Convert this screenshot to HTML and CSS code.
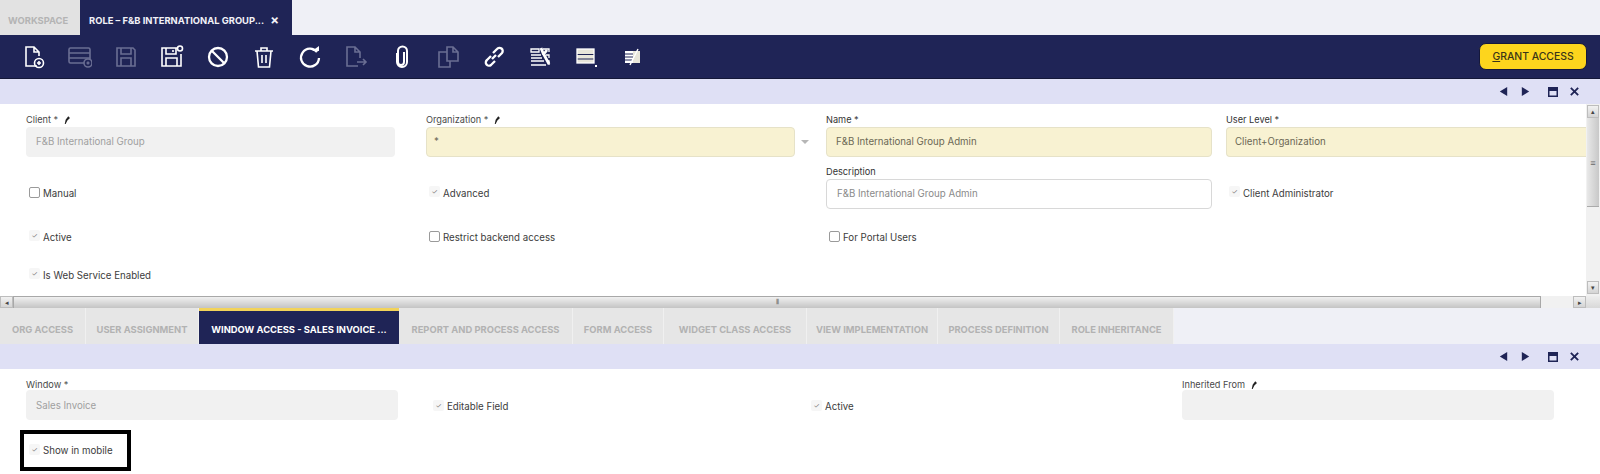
FILE: index.html
```html
<!DOCTYPE html>
<html lang="en">
<head>
<meta charset="utf-8">
<title>Role</title>
<link rel="stylesheet" href="styles.css">
</head>
<body>
<div class="maintabs">
  <div class="maintab">WORKSPACE</div>
  <div class="maintab active"><span>ROLE – F&amp;B INTERNATIONAL GROUP...</span><span class="x">×</span></div>
</div>
<div class="toolbar">
  <div class="btn"><svg viewBox="0 0 24 24"><path d="M15 21H4V2h8l5 5v4M12 2v5h5"/><circle cx="17" cy="18" r="4.500"/><path d="M15 18h4M17 16v4"/></svg></div>
  <div class="btn off"><svg viewBox="0 0 24 24"><rect x="1" y="3" width="21" height="15" rx="1.500"/><path d="M1 8h21M1 13h21"/><circle cx="20" cy="18" r="4" class="fillbg"/><path d="M18.500 18h3M20 16.500v3"/></svg></div>
  <div class="btn off"><svg viewBox="0 0 24 24"><path d="M3 3h16l2 2v16H3z"/><path d="M7 3v6h10V3M7 21v-8h10v8"/></svg></div>
  <div class="btn"><svg viewBox="0 0 24 24"><path d="M18 3H2v18h19V9"/><path d="M6 3v6h10V3M6 21v-8h11v8M13 5v2"/><circle cx="20" cy="3.500" r="2.500"/></svg></div>
  <div class="btn"><svg viewBox="0 0 24 24" class="thick"><circle cx="12" cy="12" r="9"/><path d="M6 6l12 12"/></svg></div>
  <div class="btn"><svg viewBox="0 0 24 24"><path d="M3 6h18M9 6V3h6v3M5 6l1.500 16h11L19 6M10 10v8M14 10v8"/></svg></div>
  <div class="btn"><svg viewBox="0 0 24 24" class="thick"><path d="M19 7a9 9 0 1 0 2 6"/><path d="M14 6h7V1z" class="fillwhite"/></svg></div>
  <div class="btn off"><svg viewBox="0 0 24 24"><path d="M14 21H3V2h8l5 5v6M11 2v5h5M13 17h9M19 14l3 3-3 3"/></svg></div>
  <div class="btn"><svg viewBox="0 0 24 24"><path d="M7 8v9a5 5 0 0 0 10 0V6a4.500 4.500 0 0 0-9 0v11a3 3 0 0 0 6 0V7" class="clip"/></svg></div>
  <div class="btn off"><svg viewBox="0 0 24 24"><path d="M11 7H3v15h11v-6M11 5V2h6l5 5v9H11zM17 2v5h5"/></svg></div>
  <div class="btn"><svg viewBox="0 0 24 24" class="thick"><path d="M10 14l4-4M9 11l-4 4a3 3 0 0 0 4 5l4-4M11 8l4-4a3 3 0 0 1 5 4l-4 4"/></svg></div>
  <div class="btn"><svg viewBox="0 0 24 24"><path d="M3 4h8v3H3zM3 10h10M3 13h11M3 16h13M3 20h15M15 4h6v3M18 10h3v3M20 16h1v4" class="thin"/><path d="M13 3l2 5 6 11" class="wrench"/><path d="M19 5l-4 5" class="wrench"/></svg></div>
  <div class="btn"><svg viewBox="0 0 24 24"><rect x="3" y="4" width="17" height="14" class="fillband"/><path d="M3 9.500h17M3 14h17" class="navyline"/><rect x="3" y="4" width="17" height="14" class="thin"/><rect x="21" y="20" width="2" height="2" class="fillwhite"/></svg></div>
  <div class="btn"><svg viewBox="0 0 24 24"><rect x="5" y="6" width="15" height="12" class="fillband"/><path d="M5 6h8v12H5z" class="fillwhitesoft"/><path d="M5 9h8M5 12h8M5 15h7" class="navyline"/><path d="M18 4L10 20" class="slash"/></svg></div>
  <div class="spacer"></div>
  <div class="grant"><u>G</u>RANT ACCESS</div>
</div>
<div class="bar">
  <svg class="baricon" viewBox="0 0 12 12"><path d="M10 1v10L2 6z"/></svg>
  <svg class="baricon" viewBox="0 0 12 12"><path d="M2 1v10l8-5z"/></svg>
  <svg class="baricon wide" viewBox="0 0 12 12"><path d="M1 1h10v10H1zM2.500 5v4.500h7V5z" fill-rule="evenodd"/></svg>
  <svg class="baricon" viewBox="0 0 12 12"><path d="M2 2l8 8M10 2l-8 8" class="closex"/></svg>
</div>
<div class="panel">
  <div class="viewport">
    <div class="form">
      <div class="field"><div class="label">Client * <svg class="pin" viewBox="0 0 8 10"><path d="M6 0l2 2-3 3-2 4-1 0 1-5z"/></svg></div><div class="input readonly">F&amp;B International Group</div></div>
      <div class="field"><div class="label">Organization * <svg class="pin" viewBox="0 0 8 10"><path d="M6 0l2 2-3 3-2 4-1 0 1-5z"/></svg></div><div class="selectrow"><div class="input required">*</div><span class="arrow"></span></div></div>
      <div class="field"><div class="label dark">Name *</div><div class="input required">F&amp;B International Group Admin</div></div>
      <div class="field last"><div class="label dark">User Level *</div><div class="input required">Client+Organization</div></div>

      <div class="cell low"><span class="box"></span>Manual</div>
      <div class="cell low"><span class="tick">✓</span>Advanced</div>
      <div class="field"><div class="label dark">Description</div><div class="input plain">F&amp;B International Group Admin</div></div>
      <div class="cell low"><span class="tick">✓</span>Client Administrator</div>

      <div class="cell r3"><span class="tick">✓</span>Active</div>
      <div class="cell r3"><span class="box"></span>Restrict backend access</div>
      <div class="cell r3"><span class="box"></span>For Portal Users</div>
      <div class="cell r3"></div>

      <div class="cell r4"><span class="tick">✓</span>Is Web Service Enabled</div>
    </div>
    <div class="vscroll">
      <div class="sbtn">▴</div>
      <div class="vthumb"><span class="grip">≡</span></div>
      <div class="vtrack"></div>
      <div class="sbtn">▾</div>
    </div>
  </div>
  <div class="hscroll">
    <div class="sbtn h">◂</div>
    <div class="hthumb"><span class="grip">⦀</span></div>
    <div class="htrack"></div>
    <div class="sbtn h">▸</div>
    <div class="hcorner"></div>
  </div>
</div>
<div class="subtabs">
  <div class="subtab t1">ORG ACCESS</div>
  <div class="subtab t2">USER ASSIGNMENT</div>
  <div class="subtab active">WINDOW ACCESS - SALES INVOICE ...</div>
  <div class="subtab t4">REPORT AND PROCESS ACCESS</div>
  <div class="subtab t5">FORM ACCESS</div>
  <div class="subtab t6">WIDGET CLASS ACCESS</div>
  <div class="subtab t7">VIEW IMPLEMENTATION</div>
  <div class="subtab t8">PROCESS DEFINITION</div>
  <div class="subtab t9">ROLE INHERITANCE</div>
</div>
<div class="bar">
  <svg class="baricon" viewBox="0 0 12 12"><path d="M10 1v10L2 6z"/></svg>
  <svg class="baricon" viewBox="0 0 12 12"><path d="M2 1v10l8-5z"/></svg>
  <svg class="baricon wide" viewBox="0 0 12 12"><path d="M1 1h10v10H1zM2.500 5v4.500h7V5z" fill-rule="evenodd"/></svg>
  <svg class="baricon" viewBox="0 0 12 12"><path d="M2 2l8 8M10 2l-8 8" class="closex"/></svg>
</div>
<div class="form2">
  <div class="field w"><div class="label">Window *</div><div class="input readonly">Sales Invoice</div></div>
  <div class="cell c2"><span class="tick">✓</span>Editable Field</div>
  <div class="cell c3"><span class="tick">✓</span>Active</div>
  <div class="field inh"><div class="label">Inherited From <svg class="pin" viewBox="0 0 8 10"><path d="M6 0l2 2-3 3-2 4-1 0 1-5z"/></svg></div><div class="input readonly"></div></div>
  <div class="highlight"><span class="tick">✓</span>Show in mobile</div>
</div>
</body>
</html>
```
FILE: styles.css
```css
* { box-sizing: border-box; }
html, body { margin: 0; padding: 0; }
body {
  width: 1600px;
  height: 474px;
  overflow: hidden;
  background: #fff;
  font-family: "Inter", "Liberation Sans", sans-serif;
  font-size: 9.700px;
  color: #3c3c3c;
}
.maintabs { display: flex; height: 35px; background: #eff0f6; }
.maintab {
  width: 80px;
  background: #e2e2e2;
  color: #b4b4b4;
  font-weight: 700;
  font-size: 9.400px;
  padding-left: 8px;
  line-height: 41px;
  white-space: nowrap;
}
.maintab.active {
  width: 212px;
  background: #1f2456;
  color: #f2f2f8;
  padding-left: 9px;
  display: flex;
  justify-content: space-between;
  padding-right: 13px;
}
.x { font-size: 13px; }
.toolbar {
  height: 44px;
  background: #1f2456;
  border-bottom: 1px solid #141838;
  display: flex;
  align-items: center;
  padding-left: 11px;
  padding-right: 13px;
}
.btn { width: 46px; height: 24px; display: flex; justify-content: center; }
.btn svg { width: 24px; height: 24px; fill: none; stroke: #fff; stroke-width: 1.600; }
.btn.off svg { stroke: #6a6e93; }
.btn svg.thick { stroke-width: 2.300; }
.btn .fillbg { fill: #1f2456; }
.btn .fillwhite { fill: #fff; stroke: none; }
.btn .fillband { fill: #e8e6da; stroke: none; }
.btn .fillwhitesoft { fill: #fff; stroke: none; }
.btn .navyline { stroke: #1f2456; stroke-width: 1; }
.btn .thin { stroke-width: 1.300; }
.btn .wrench { stroke-width: 2.800; }
.btn .slash { stroke-width: 1.400; }
.btn .clip { stroke-width: 2; }
.spacer { flex: 1; }
.grant {
  width: 108px;
  height: 27px;
  border-radius: 7px;
  background: #fdd51d;
  border: 1px solid #15183a;
  color: #3a3418;
  font-size: 10.400px;
  font-weight: 500;
  text-align: center;
  line-height: 25px;
  white-space: nowrap;
}
.bar {
  height: 25px;
  background: #dfe0f5;
  display: flex;
  align-items: center;
  justify-content: flex-end;
  padding-right: 20px;
  gap: 11px;
}
.baricon { width: 11px; height: 11px; fill: #1f2456; }
.baricon.wide { width: 12px; height: 12px; margin-left: 5px; margin-right: -1px; }
.baricon .closex { stroke: #1f2456; stroke-width: 2; fill: none; }
.panel { height: 204px; display: flex; flex-direction: column; }
.viewport { height: 192px; display: flex; }
.form {
  width: 1586px;
  overflow: hidden;
  display: grid;
  grid-template-columns: 400px 400px 400px 360px;
  grid-template-rows: 52px 51px 44px 38px;
  padding: 9px 0 0 26px;
}
.field { min-width: 0; }
.label { font-size: 9.200px; line-height: 14px; height: 14px; color: #4a4a4a; white-space: nowrap; }
.label.dark { color: #333; }
.pin { width: 7px; height: 9px; margin-left: 2px; fill: #222; vertical-align: -2px; }
.input {
  height: 30px;
  width: 369px;
  border-radius: 4px;
  padding-left: 10px;
  line-height: 29px;
  font-size: 9.700px;
  white-space: nowrap;
  overflow: hidden;
}
.readonly { background: #f1f1f1; color: #a0a0a0; }
.required { background: #f8f2d2; border: 1px solid #e6e2c8; color: #6b6855; width: 386px; line-height: 27px; padding-left: 9px; }
.plain { background: #fff; border: 1px solid #d8d8d8; color: #8a8a8a; width: 386px; line-height: 27px; }
.selectrow { display: flex; align-items: center; }
.selectrow .required { width: 369px; padding-left: 7px; }
.arrow {
  margin-left: 6px;
  border-left: 4px solid transparent;
  border-right: 4px solid transparent;
  border-top: 4px solid #b6b6b6;
}
.last .required { width: 360px; border-right: 0; border-radius: 4px 0 0 4px; padding-left: 8px; }
.cell { display: flex; align-items: center; padding-left: 3px; white-space: nowrap; }
.low { padding-top: 5px; }
.r3 { padding-bottom: 2px; }
.r4 { padding-bottom: 8px; }
.box {
  width: 11px;
  height: 11px;
  border: 1px solid #9a9a9a;
  border-radius: 2px;
  margin-right: 3px;
  margin-top: -2px;
  background: #fff;
}
.tick {
  width: 11px;
  height: 11px;
  margin-right: 3px;
  margin-top: -3px;
  font-size: 7px;
  line-height: 11px;
  text-align: center;
  color: #777;
  background: #f6f6f6;
  border-radius: 2px;
}
.vscroll {
  width: 14px;
  display: flex;
  flex-direction: column;
  background: #f1f1f1;
  padding: 1px 1px 2px;
  border-left: 0;
}
.sbtn {
  width: 12px;
  height: 13px;
  background: linear-gradient(#f2f2f2, #d4d4d4);
  border: 1px solid #bdbdbd;
  font-size: 7px;
  line-height: 11px;
  text-align: center;
  color: #444;
  flex: none;
}
.vthumb {
  height: 89px;
  background: linear-gradient(90deg, #e8e8e8, #c8c8c8);
  border-bottom: 1px solid #aaa;
  text-align: center;
  line-height: 89px;
  font-size: 9px;
  color: #666;
  width: 12px;
  flex: none;
}
.vtrack { flex: 1; }
.hscroll { height: 12px; display: flex; align-items: stretch; background: #f1f1f1; }
.hscroll .sbtn.h { width: 13px; height: 12px; }
.hthumb {
  width: 1528px;
  background: linear-gradient(#f0f0f0, #c4c4c4);
  border: 1px solid #a8a8a8;
  border-width: 1px 1px 0;
  text-align: center;
  font-size: 7px;
  line-height: 10px;
  color: #555;
}
.htrack { width: 32px; }
.hcorner { flex: 1; background: linear-gradient(#eeeeee, #d8d8d8); }
.subtabs { display: flex; height: 36px; background: #eff0f6; }
.subtab {
  background: #e6e6e6;
  border-right: 1px solid #f0f0f0;
  color: #b2b2b2;
  font-weight: 700;
  font-size: 9.400px;
  text-align: center;
  line-height: 44px;
  white-space: nowrap;
}
.t1 { width: 86px; }
.t2 { width: 113px; }
.subtab.active {
  width: 200px;
  background: #1f2456;
  color: #fff;
  border-top: 3px solid #f2d35a;
  border-right: 0;
  line-height: 38px;
}
.t4 { width: 174px; }
.t5 { width: 91px; }
.t6 { width: 143px; }
.t7 { width: 131px; }
.t8 { width: 122px; }
.t9 { width: 114px; }
.form2 {
  display: grid;
  grid-template-columns: 404px 381px 371px 372px;
  grid-template-rows: 51px 54px;
  padding: 7px 0 0 26px;
}
.form2 .label { line-height: 18px; }
.form2 .input { line-height: 31px; }
.w .input { width: 372px; }
.c2, .c3 { padding-top: 10px; }
.c3 { padding-left: 0; }
.inh .input { width: 372px; }
.highlight {
  align-self: start;
  width: 111px;
  height: 41px;
  margin-left: -6px;
  margin-top: 3px;
  border: 4px solid #000;
  display: flex;
  align-items: center;
  padding-left: 5px;
  white-space: nowrap;
  color: #3c3c3c;
}
```
